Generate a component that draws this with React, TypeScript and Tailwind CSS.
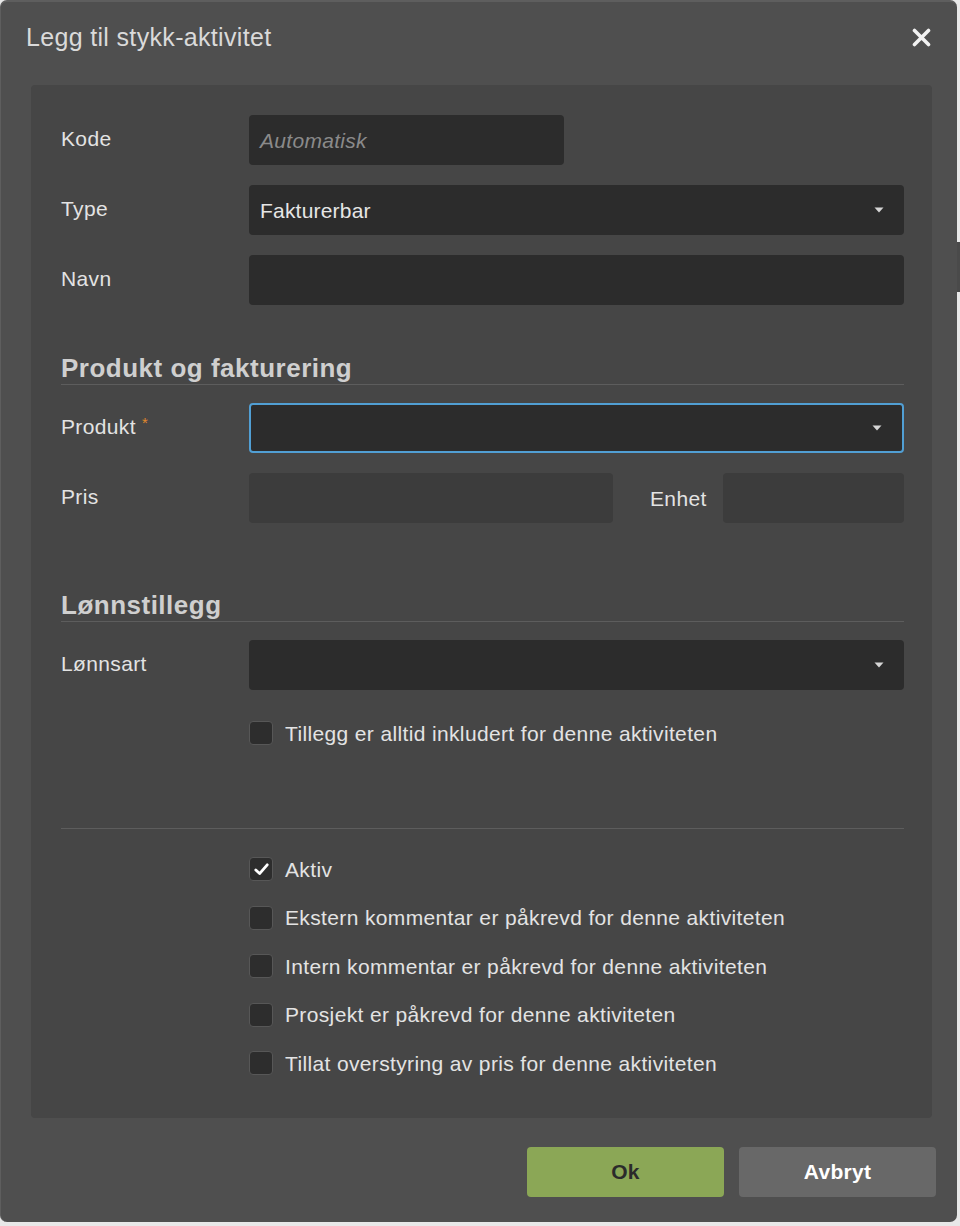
import React from "react";

const font = "[font-family:'Liberation_Sans',Arial,Helvetica,sans-serif]";

function Caret() {
  return (
    <svg width="10" height="6" viewBox="0 0 10 6" className="shrink-0">
      <path d="M0.5 0.5 L9.5 0.5 L5 5.5 Z" fill="#d6d6d6" />
    </svg>
  );
}

function Check() {
  return (
    <svg width="15" height="13" viewBox="0 0 15 13">
      <path
        d="M1.8 7 L5.6 10.6 L13.2 1.8"
        fill="none"
        stroke="#ffffff"
        strokeWidth="2.8"
        strokeLinecap="round"
        strokeLinejoin="round"
      />
    </svg>
  );
}

function Checkbox({ label, checked = false }: { label: string; checked?: boolean }) {
  return (
    <label className="flex items-center gap-[12px] h-[24px]">
      <span className="flex items-center justify-center w-[24px] h-[24px] rounded-[4px] bg-[#2d2d2d] border border-[#575757]">
        {checked && <Check />}
      </span>
      <span className="text-[21px] tracking-[0.36px] text-[#e3e3e3] leading-none">{label}</span>
    </label>
  );
}

function Row({ label, children, required = false }: { label: string; children: React.ReactNode; required?: boolean }) {
  return (
    <div className="grid grid-cols-[188px_1fr] items-center h-[50px]">
      <div className="text-[21px] tracking-[0.36px] text-[#e3e3e3] leading-none -mt-[3px]">
        {label}
        {required && <span className="text-[#e0892c] text-[15px] align-top ml-[6px] relative -top-[1px]">*</span>}
      </div>
      {children}
    </div>
  );
}

function Field({ children, className = "" }: { children?: React.ReactNode; className?: string }) {
  return (
    <div className={`h-[50px] rounded-[4px] bg-[#2c2c2c] flex items-center px-[11px] ${className}`}>{children}</div>
  );
}

function Select({ value, focused = false }: { value?: string; focused?: boolean }) {
  return (
    <div
      className={`h-[50px] rounded-[4px] bg-[#2c2c2c] flex items-center justify-between pl-[11px] pr-[20px] ${
        focused ? "border-2 border-[#519fd4] pl-[9px] pr-[18px]" : ""
      }`}
    >
      <span className="text-[21px] tracking-[0.2px] text-[#e6e6e6] leading-none">{value}</span>
      <Caret />
    </div>
  );
}

function SectionHeader({ title }: { title: string }) {
  return (
    <div className="border-b border-[#5d5d5d] pb-[1px]">
      <h2 className="text-[26px] tracking-[0.5px] font-bold text-[#cfcfcf] leading-[30px]">{title}</h2>
    </div>
  );
}

export default function App() {
  return (
    <div className={`flex w-[960px] h-[1226px] bg-[#e8e8e8] ${font}`}>
      <div className="w-[957px] h-[1222px] bg-[#4f4f4f] rounded-[7px] border-t-2 border-l border-[#5e5e5e] flex flex-col">
        {/* header */}
        <div className="h-[83px] flex items-start justify-between pl-[25px] pr-[26px] pt-[20px]">
          <h1 className="text-[25px] tracking-[0.33px] text-[#dadada] leading-[30px]">Legg til stykk-aktivitet</h1>
          <svg width="19" height="19" viewBox="0 0 19 19" className="mt-[6px]">
            <path d="M2.5 2.5 L16.5 16.5 M16.5 2.5 L2.5 16.5" stroke="#f2f2f2" strokeWidth="3.6" strokeLinecap="round" />
          </svg>
        </div>

        {/* form panel */}
        <div className="ml-[30px] mr-[25px] h-[1033px] rounded-[4px] bg-[#464646] pl-[30px] pr-[28px] pt-[30px]">
          <div className="flex flex-col gap-[20px]">
            <Row label="Kode">
              <Field className="w-[315px]">
                <span className="text-[21px] tracking-[0.3px] italic text-[#8a8a8a] leading-none">Automatisk</span>
              </Field>
            </Row>
            <Row label="Type">
              <Select value="Fakturerbar" />
            </Row>
            <Row label="Navn">
              <Field />
            </Row>
          </div>

          <div className="mt-[48px]">
            <SectionHeader title="Produkt og fakturering" />
          </div>

          <div className="mt-[18px] flex flex-col gap-[20px]">
            <Row label="Produkt" required>
              <Select focused />
            </Row>
            <Row label="Pris">
              <div className="flex items-center">
                <div className="w-[364px] h-[50px] rounded-[4px] bg-[#3c3c3c]" />
                <span className="ml-[37px] w-[73px] text-[21px] tracking-[0.36px] text-[#e3e3e3] leading-none">Enhet</span>
                <div className="flex-1 h-[50px] rounded-[4px] bg-[#3c3c3c]" />
              </div>
            </Row>
          </div>

          <div className="mt-[67px]">
            <SectionHeader title="Lønnstillegg" />
          </div>

          <div className="mt-[18px]">
            <Row label="Lønnsart">
              <Select />
            </Row>
          </div>

          <div className="mt-[31px] pl-[188px]">
            <Checkbox label="Tillegg er alltid inkludert for denne aktiviteten" />
          </div>

          <div className="mt-[83px] border-t border-[#5d5d5d]" />

          <div className="mt-[28px] pl-[188px] flex flex-col gap-[24.5px]">
            <Checkbox label="Aktiv" checked />
            <Checkbox label="Ekstern kommentar er påkrevd for denne aktiviteten" />
            <Checkbox label="Intern kommentar er påkrevd for denne aktiviteten" />
            <Checkbox label="Prosjekt er påkrevd for denne aktiviteten" />
            <Checkbox label="Tillat overstyring av pris for denne aktiviteten" />
          </div>
        </div>

        {/* footer buttons */}
        <div className="flex justify-end gap-[15px] pr-[21px] mt-[29px]">
          <button className="w-[197px] h-[50px] rounded-[4px] bg-[#8ba756] text-[21px] tracking-[0.3px] font-bold text-[#2b2b2b]">Ok</button>
          <button className="w-[197px] h-[50px] rounded-[4px] bg-[#686868] text-[21px] tracking-[0.3px] font-bold text-white">Avbryt</button>
        </div>
      </div>
      <div className="flex-1 flex flex-col">
        <div className="h-[242px]" />
        <div className="h-[50px] bg-[#4a4a4a]" />
      </div>
    </div>
  );
}
